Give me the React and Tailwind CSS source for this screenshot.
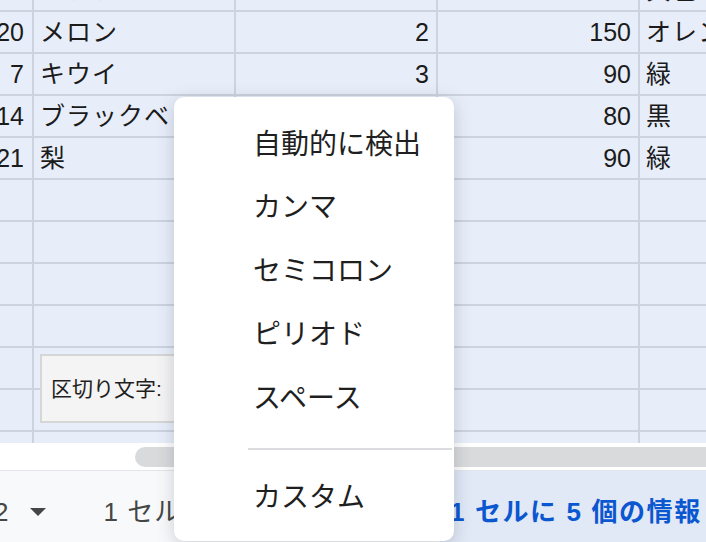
const rows = [
  { a: "15", b: "バナナ", c: "4", d: "60", e: "黄色" },
  { a: "20", b: "メロン", c: "2", d: "150", e: "オレンジ" },
  { a: "7", b: "キウイ", c: "3", d: "90", e: "緑" },
  { a: "14", b: "ブラックベリー", c: "", d: "80", e: "黒" },
  { a: "21", b: "梨", c: "", d: "90", e: "緑" },
  {}, {}, {}, {}, {}, {}, {},
];

const options = ["自動的に検出", "カンマ", "セミコロン", "ピリオド", "スペース"];

const font = { fontFamily: '"Liberation Sans", Arial, "Noto Sans CJK JP", sans-serif' };

const Row = ({ r }) => (
  <div className="flex h-[42px] border-b-2 border-[#cdd3df] text-[25px] leading-none text-[#1b1b1b]">
    <div className="w-[34px] shrink-0 border-r-2 border-[#cdd3df] flex items-center justify-end pr-[8px]">{r.a}</div>
    <div className="w-[202px] shrink-0 border-r-2 border-[#cdd3df] flex items-center pl-[6px] whitespace-nowrap overflow-visible tracking-[1px]">{r.b}</div>
    <div className="w-[202px] shrink-0 border-r-2 border-[#cdd3df] flex items-center justify-end pr-[7px]">{r.c}</div>
    <div className="w-[202px] shrink-0 border-r-2 border-[#cdd3df] flex items-center justify-end pr-[7px]">{r.d}</div>
    <div className="flex-1 flex items-center pl-[6px] whitespace-nowrap tracking-[1px]">{r.e}</div>
  </div>
);

export default function App() {
  return (
    <div className="relative w-[706px] h-[542px] overflow-hidden bg-white" style={font}>
      <div className="h-[443px] overflow-hidden bg-[#e8eef9]">
        <div className="mt-[-30px]">
          {rows.map((r, i) => (
            <Row key={i} r={r} />
          ))}
        </div>
      </div>

      <div className="h-[4px]" />
      <div className="h-[20px] flex">
        <div className="ml-[135px] flex-1 rounded-l-full bg-[#d9dadc]" />
      </div>
      <div className="h-[3px]" />

      <div className="h-[72px] border-t border-[#e3e5e8] bg-[#f8f9fb] flex items-stretch text-[26px] leading-none">
        <div className="flex items-center pt-[10px]">
          <span className="ml-[-6px] text-[#444746]">2</span>
          <svg width="16" height="10" viewBox="0 0 16 10" className="ml-[22px]">
            <path d="M0 1 L16 1 L8 9 Z" fill="#444746" />
          </svg>
          <span className="ml-[57px] text-[#444746] tracking-[1px] whitespace-nowrap">1 セルに 1 個の情報</span>
        </div>
        <div className="ml-auto h-full w-[266px] shrink-0 bg-[#e1e8f6] flex items-center pt-[10px] pl-[10px]">
          <span className="font-bold text-[#0b57d0] tracking-[1.6px] whitespace-nowrap">1 セルに 5 個の情報</span>
        </div>
      </div>

      <div className="absolute left-[40px] top-[354px] w-[160px] h-[69px] bg-[#f4f4f4] border-2 border-[#d6d6d6] flex items-center pl-[9px] text-[21px] text-[#1f1f1f]">
        区切り文字:
      </div>

      <div className="absolute left-[174px] top-[97px] w-[280px] h-[444px] bg-white rounded-[10px] shadow-[0_4px_18px_rgba(40,50,70,0.22)] pt-[16px] text-[28px] text-[#1f1f1f]">
        {options.map((o) => (
          <div key={o} className="h-[63.5px] flex items-center pl-[79px] whitespace-nowrap">
            {o}
          </div>
        ))}
        <div className="mt-[17px] ml-[74px] mr-[2px] h-[2px] bg-[#dadce0]" />
        <div className="mt-[16px] h-[64px] flex items-center pl-[79px]">カスタム</div>
      </div>
    </div>
  );
}
